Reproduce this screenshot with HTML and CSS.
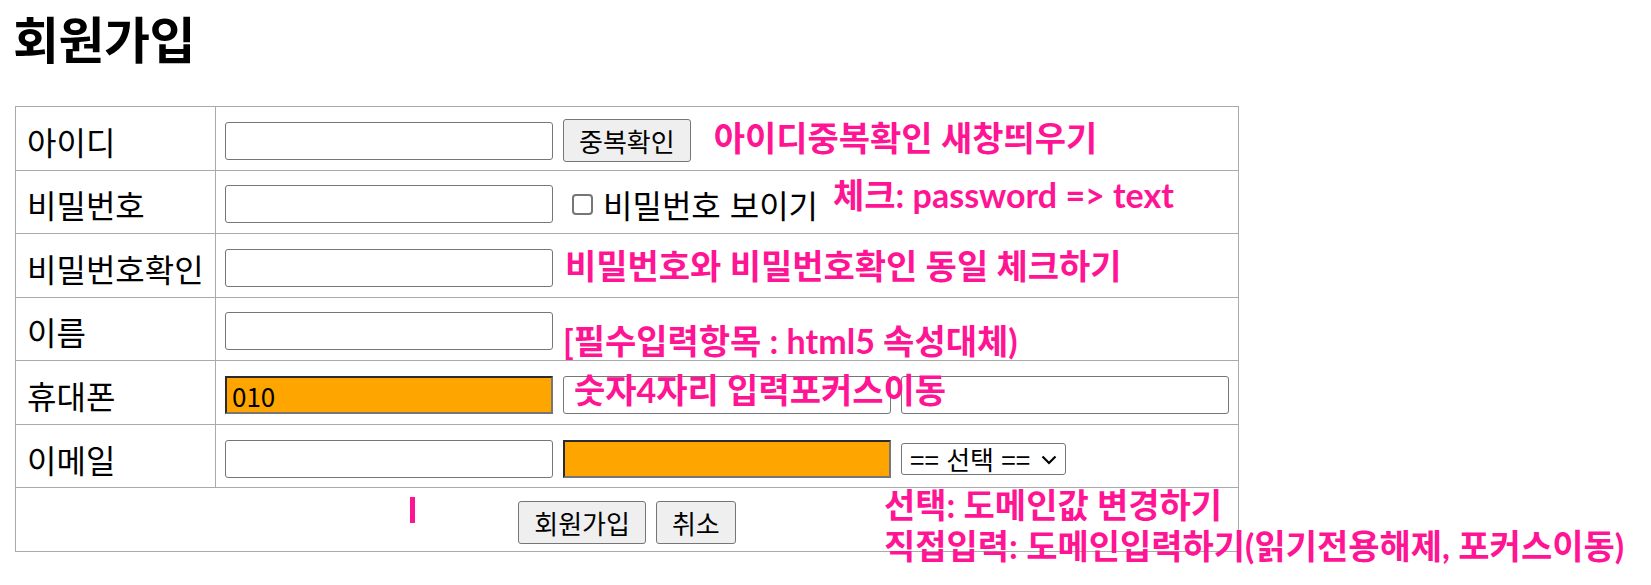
FILE: index.html
```html
<!DOCTYPE html>
<html lang="ko">
<head>
<meta charset="utf-8">
<title>회원가입</title>
<link rel="stylesheet" href="styles.css">
</head>
<body>
<h1 class="page-title">회원가입</h1>
<form class="join-form">
  <table class="join-table">
    <colgroup><col class="col-label"><col></colgroup>
    <tr>
      <td class="label">아이디</td>
      <td class="field">
        <div class="field-row">
          <input class="txt" type="text">
          <button type="button" class="btn">중복확인</button>
          <span class="note note-id">아이디중복확인 새창띄우기</span>
        </div>
      </td>
    </tr>
    <tr>
      <td class="label">비밀번호</td>
      <td class="field">
        <div class="field-row">
          <input class="txt" type="password">
          <input class="chk" type="checkbox" id="pwShow">
          <label class="chk-label" for="pwShow">비밀번호 보이기</label>
          <span class="note note-pw">체크: password =&gt; text</span>
        </div>
      </td>
    </tr>
    <tr>
      <td class="label">비밀번호확인</td>
      <td class="field">
        <div class="field-row">
          <input class="txt" type="password">
          <span class="note note-pw2">비밀번호와 비밀번호확인 동일 체크하기</span>
        </div>
      </td>
    </tr>
    <tr>
      <td class="label">이름</td>
      <td class="field">
        <div class="field-row">
          <input class="txt" type="text">
          <span class="note note-name">[필수입력항목 : html5 속성대체)</span>
        </div>
      </td>
    </tr>
    <tr>
      <td class="label">휴대폰</td>
      <td class="field">
        <div class="field-row">
          <input class="txt txt-filled" type="text" value="010">
          <input class="txt" type="text">
          <input class="txt" type="text">
        </div>
      </td>
    </tr>
    <tr>
      <td class="label">이메일</td>
      <td class="field">
        <div class="field-row">
          <input class="txt" type="text">
          <input class="txt txt-filled" type="text">
          <div class="select-wrap">
            <select class="sel">
              <option>== 선택 ==</option>
              <option>naver.com</option>
              <option>daum.net</option>
              <option>gmail.com</option>
              <option>직접입력</option>
            </select>
            <svg class="chev" width="16" height="10" viewBox="0 0 16 10" aria-hidden="true"><polyline points="1.5,1.5 8,8 14.5,1.5" fill="none" stroke="#000" stroke-width="2.2"/></svg>
          </div>
        </div>
      </td>
    </tr>
    <tr>
      <td class="actions" colspan="2">
        <div class="action-row">
          <button type="submit" class="btn">회원가입</button>
          <button type="reset" class="btn">취소</button>
        </div>
      </td>
    </tr>
  </table>
  <span class="note note-phone">숫자4자리 입력포커스이동</span>
  <div class="note note-domain">선택: 도메인값 변경하기<br>직접입력: 도메인입력하기(읽기전용해제, 포커스이동)</div>
  <span class="cursor-mark"></span>
</form>
</body>
</html>
```
FILE: styles.css
```css
* { box-sizing: border-box; }
html, body { margin: 0; padding: 0; background: #fff; }
body {
  font-family: "Noto Sans CJK KR", "Malgun Gothic", sans-serif;
  color: #000;
  padding: 0 15px;
  min-height: 585px;
}
.page-title {
  margin: 0 0 32px -2px;
  font-size: 50px;
  line-height: 74px;
  font-weight: 700;
  letter-spacing: -0.5px;
}
.join-form { position: relative; margin: 0; }
.join-table {
  border-collapse: collapse;
  table-layout: fixed;
  width: 1224px;
}
.col-label { width: 200px; }
.join-table tr { height: 63.57px; }
.join-table td {
  border: 1px solid #aaa;
  padding: 5px 9px 0 9px;
  vertical-align: middle;
}
.label {
  font-size: 32px;
  line-height: 40px;
  white-space: nowrap;
}
.join-table td.label { padding-left: 11px; }
.field-row { display: flex; align-items: center; gap: 10px; }
.txt {
  width: 328px;
  height: 38px;
  margin: 0;
  padding: 0 5px;
  border: 1px solid #767676;
  border-radius: 3px;
  background: #fff;
  font: 26px "Noto Sans CJK KR", sans-serif;
  color: #000;
  flex: none;
}
.txt-filled {
  background: #ffa500;
  border-width: 2px;
  border-style: solid;
  border-color: #2b2b2b #767676 #767676 #2b2b2b;
  border-radius: 0;
}
.btn {
  height: 43px;
  margin: 0;
  padding: 0 15px;
  border: 1px solid #767676;
  border-radius: 3px;
  background: #efefef;
  color: #000;
  font: 26px "Noto Sans CJK KR", sans-serif;
  flex: none;
}
.chk {
  appearance: none;
  -webkit-appearance: none;
  width: 21px;
  height: 21px;
  margin: 0 0 0 9px;
  border: 2px solid #767676;
  border-radius: 4px;
  background: #fff;
  flex: none;
}
.chk-label { font-size: 32px; line-height: 40px; white-space: nowrap; }
.note {
  color: #ff1493;
  font-family: Lato, "Noto Sans CJK KR", sans-serif;
  font-weight: 700;
  font-size: 34px;
  line-height: 41px;
  white-space: nowrap;
}
.note-id { margin-left: 13px; transform: translateY(-3px); }
.note-pw { margin-left: 5px; transform: translateY(-10px); }
.note-pw2 { margin-left: 2px; transform: translateY(-2px); }
.note-name { margin-left: 0; transform: translateY(9px); }
.select-wrap { position: relative; flex: none; }
.sel {
  appearance: none;
  -webkit-appearance: none;
  width: 165px;
  height: 32px;
  margin: 0;
  padding: 0 0 0 8px;
  border: 1px solid #767676;
  border-radius: 3px;
  background: #fff;
  color: #000;
  font: 26px "Noto Sans CJK KR", sans-serif;
  line-height: 30px;
}
.chev {
  position: absolute;
  right: 9px;
  top: 12px;
  pointer-events: none;
}
.actions { text-align: center; }
.action-row { display: flex; justify-content: center; gap: 10px; }
.note-phone {
  position: absolute;
  left: 559px;
  top: 263px;
}
.note-domain {
  position: absolute;
  left: 869px;
  top: 378px;
}
.cursor-mark {
  position: absolute;
  left: 395px;
  top: 391px;
  width: 5px;
  height: 26px;
  background: #ff1493;
}
```
